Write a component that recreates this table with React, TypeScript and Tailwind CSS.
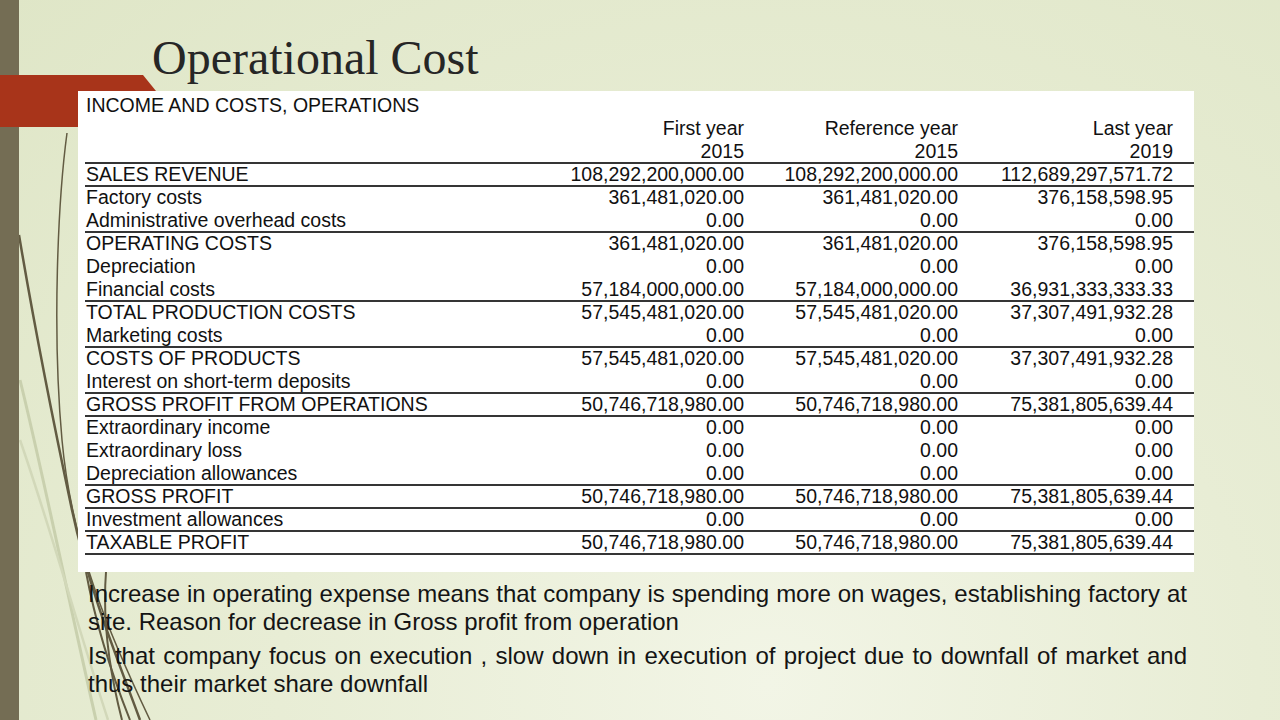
import React from "react";

type Row = [string, string, string, string, boolean];

const rows: Row[] = [
  ["SALES REVENUE", "108,292,200,000.00", "108,292,200,000.00", "112,689,297,571.72", true],
  ["Factory costs", "361,481,020.00", "361,481,020.00", "376,158,598.95", false],
  ["Administrative overhead costs", "0.00", "0.00", "0.00", true],
  ["OPERATING COSTS", "361,481,020.00", "361,481,020.00", "376,158,598.95", false],
  ["Depreciation", "0.00", "0.00", "0.00", false],
  ["Financial costs", "57,184,000,000.00", "57,184,000,000.00", "36,931,333,333.33", true],
  ["TOTAL PRODUCTION COSTS", "57,545,481,020.00", "57,545,481,020.00", "37,307,491,932.28", false],
  ["Marketing costs", "0.00", "0.00", "0.00", true],
  ["COSTS OF PRODUCTS", "57,545,481,020.00", "57,545,481,020.00", "37,307,491,932.28", false],
  ["Interest on short-term deposits", "0.00", "0.00", "0.00", true],
  ["GROSS PROFIT FROM OPERATIONS", "50,746,718,980.00", "50,746,718,980.00", "75,381,805,639.44", true],
  ["Extraordinary income", "0.00", "0.00", "0.00", false],
  ["Extraordinary loss", "0.00", "0.00", "0.00", false],
  ["Depreciation allowances", "0.00", "0.00", "0.00", true],
  ["GROSS PROFIT", "50,746,718,980.00", "50,746,718,980.00", "75,381,805,639.44", true],
  ["Investment allowances", "0.00", "0.00", "0.00", true],
  ["TAXABLE PROFIT", "50,746,718,980.00", "50,746,718,980.00", "75,381,805,639.44", true],
];

function TableRow({ cells, line }: { cells: string[]; line: boolean }) {
  return (
    <div
      className={
        line
          ? "grid grid-cols-[453px_214px_214px_215px] h-[23px] border-b-2 border-[#353535]"
          : "grid grid-cols-[453px_214px_214px_215px] h-[23px] border-b-2 border-transparent"
      }
    >
      <div className="pl-[1px] leading-[21px] whitespace-nowrap">{cells[0]}</div>
      <div className="pr-[8px] text-right leading-[21px] whitespace-nowrap">{cells[1]}</div>
      <div className="pr-[8px] text-right leading-[21px] whitespace-nowrap">{cells[2]}</div>
      <div className="pr-[8px] text-right leading-[21px] whitespace-nowrap">{cells[3]}</div>
    </div>
  );
}

export default function App() {
  return (
    <div className="relative w-[1280px] h-[720px] overflow-hidden flex bg-[radial-gradient(ellipse_at_60%_95%,#f2f5e6_0%,#e8edd5_45%,#dfe6c7_100%)]">
      {/* decorative curves */}
      <svg
        className="absolute left-0 top-0 z-0"
        width="220"
        height="720"
        viewBox="0 0 220 720"
        fill="none"
      >
        <path d="M20 380 C 40 460, 62 570, 96 720" stroke="#c9d0ae" strokeWidth="3" />
        <path d="M20 440 C 48 520, 82 640, 108 720" stroke="#d2d8b9" strokeWidth="2.5" />
        <path d="M67 133 C 58 200, 52 330, 62 440 S 112 640, 150 720" stroke="#625b42" strokeWidth="1.5" />
        <path d="M19 235 C 35 330, 55 430, 72 510 S 118 660, 140 720" stroke="#625b42" strokeWidth="2.5" />
        <path d="M86 572 C 95 620, 110 670, 130 720" stroke="#625b42" strokeWidth="2" />
        <path d="M106 572 C 103 612, 107 662, 122 720" stroke="#625b42" strokeWidth="2" />
      </svg>

      {/* red tab */}
      <div className="absolute left-0 top-[75px] z-10 w-[156px] h-[52px] bg-[#a8341a] [clip-path:polygon(0_0,143px_0,156px_16px,156px_100%,0_100%)]" />

      {/* left bar */}
      <div className="relative z-[5] w-[19px] h-full shrink-0 bg-[#746d54]" />

      <div className="relative z-20 flex flex-col">
        <div className="pt-[34px] pl-[133px] h-[82px]">
          <h1 className="text-[48px] leading-[48px] text-[#262626] whitespace-nowrap [font-family:'Liberation_Serif','Times_New_Roman',serif]">
            Operational Cost
          </h1>
        </div>

        <div className="mt-[9px] ml-[59px] w-[1116px] h-[481px] bg-white pt-[4px] pl-[7px] text-[19.5px] text-[#111111] [font-family:'Liberation_Sans',Arial,sans-serif]">
          <div className="h-[23px] leading-[21px] pl-[1px]">INCOME AND COSTS, OPERATIONS</div>
          <TableRow cells={["", "First year", "Reference year", "Last year"]} line={false} />
          <TableRow cells={["", "2015", "2015", "2019"]} line={true} />
          {rows.map((r, i) => (
            <TableRow key={i} cells={[r[0], r[1], r[2], r[3]]} line={r[4]} />
          ))}
        </div>

        <div className="mt-[8px] ml-[69px] w-[1099px] text-[24px] leading-[28px] text-[#141414] [font-family:'Liberation_Sans',Arial,sans-serif]">
          <p className="text-justify">
            Increase in operating expense means that company is spending more on wages, establishing factory at
            site. Reason for decrease in Gross profit from operation
          </p>
          <p className="mt-[6px] text-justify">
            Is that company focus on execution , slow down in execution of project due to downfall of market and
            thus their market share downfall
          </p>
        </div>
      </div>
    </div>
  );
}
